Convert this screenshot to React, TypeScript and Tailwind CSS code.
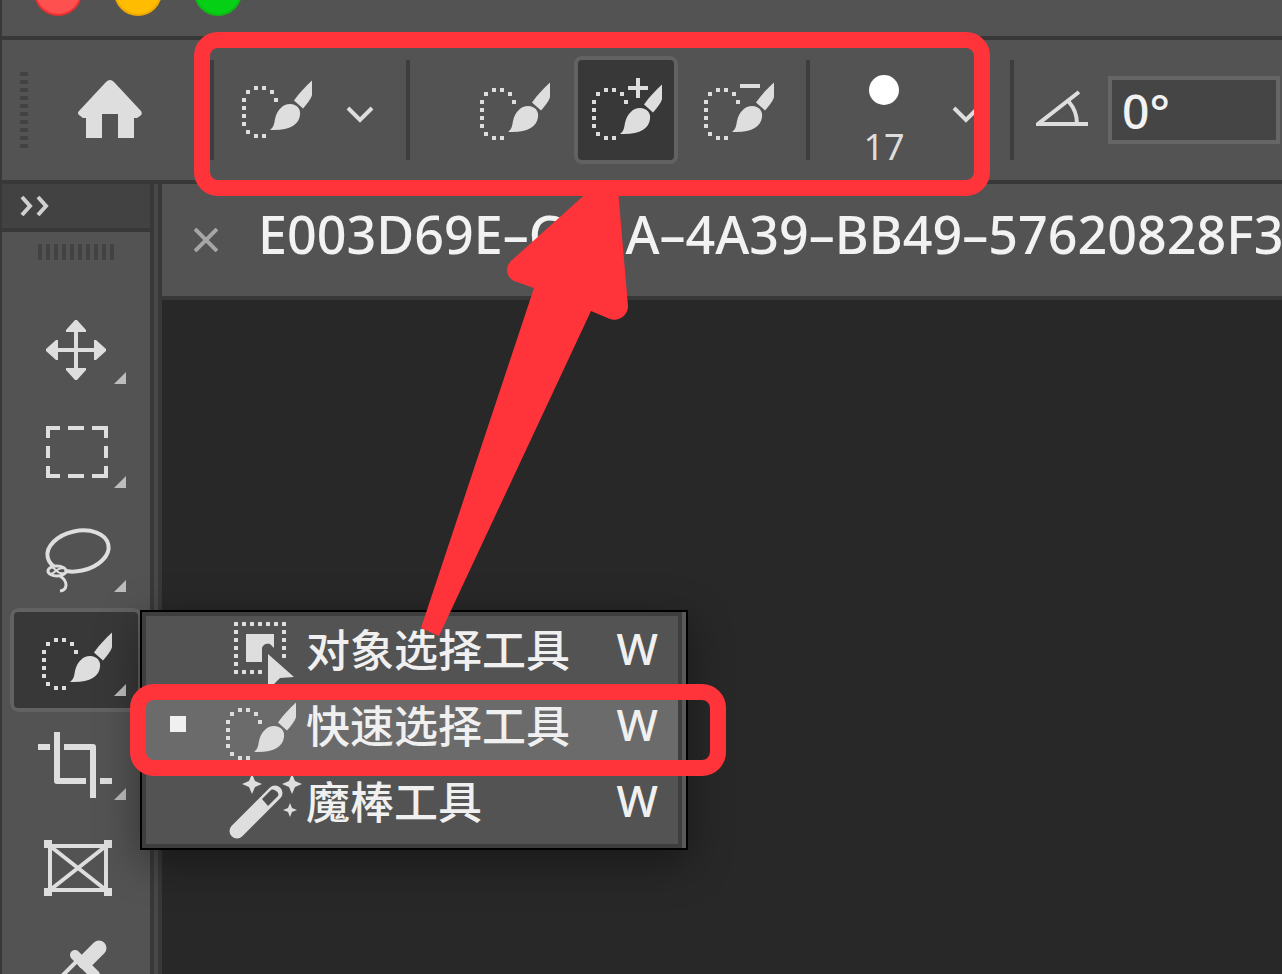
import { useState, type ReactNode } from "react";

const DOTS: Array<[number, number]> = [
    [14, 6], [22, 6], [6, 10], [30, 10], [2, 18], [34, 18],
    [2, 26], [2, 34], [2, 42], [6, 50], [14, 54], [22, 54],
];

const OBJECT_DOTS: Array<[number, number]> = [
    [10, 6], [18, 6], [26, 6], [34, 6], [42, 6], [50, 6], [58, 6],
    [10, 14], [10, 22], [10, 30], [10, 38], [10, 46], [10, 54],
    [18, 54], [26, 54], [34, 54],
    [58, 14], [58, 22], [58, 30], [58, 38],
];

// Dotted selection + brush, drawn in a 74x60 box
function QuickSelectShape({ mode = "new" }: { mode?: "new" | "add" | "subtract" }) {
    return (
        <>
            {DOTS.map(([x, y]) => (
                <rect key={`${x}-${y}`} x={x} y={y} width="4" height="4" fill="#dedede" />
            ))}
            <g fill="#dedede" transform={mode === "add" ? "translate(0 2)" : undefined}>
                <path d="M72 0.5V15C71 19 67 24 63 28.5L54 20.5C60 12 66 6 72 0.5Z" />
                <path d="M30 50C34 47 34 44 35 39C37 30 43 24 50 24C57 24 61 29 60 35C59 45 49 51 30 50Z" />
            </g>
            {mode === "add" && <path d="M38 6H58M48 -4V16" stroke="#dedede" strokeWidth="4" />}
            {mode === "subtract" && <path d="M38 4H58" stroke="#dedede" strokeWidth="4" />}
        </>
    );
}

function QuickSelectIcon({ mode }: { mode?: "new" | "add" | "subtract" }) {
    return (
        <svg className="h-15 w-[74px] shrink-0 overflow-visible" viewBox="0 0 74 60">
            <QuickSelectShape mode={mode} />
        </svg>
    );
}

function Chevron() {
    return (
        <svg className="h-7 w-7 shrink-0" viewBox="0 0 28 28" fill="none" stroke="#dedede" strokeWidth="4">
            <path d="M2 12L14 24L26 12" />
        </svg>
    );
}

function Separator() {
    return <div className="h-25 w-1 shrink-0 bg-[#3d3d3d]" />;
}

type Tool = { id: string; label: string; flyout: boolean; icon: ReactNode };

const TOOLS: Tool[] = [
    {
        id: "move",
        label: "移动工具",
        flyout: true,
        icon: (
            <g fill="#dedede">
                <path d="M64 34H68V74H64ZM46 52H86V56H46Z" />
                <path d="M65 24H67L76 34V36H56V34ZM65 84H67L76 74V72H56V74ZM36 53V55L46 64H48V44H46ZM96 53V55L86 64H84V44H86Z" />
            </g>
        ),
    },
    {
        id: "marquee",
        label: "矩形选框工具",
        flyout: true,
        icon: (
            <path
                d="M38 38V28H50M58 28H74M82 28H96V38M96 46V58M96 66V76H82M74 76H58M50 76H38V66M38 58V46"
                fill="none"
                stroke="#dedede"
                strokeWidth="4"
            />
        ),
    },
    {
        id: "lasso",
        label: "套索工具",
        flyout: true,
        icon: (
            <g fill="none" stroke="#dedede">
                <ellipse cx="68" cy="47" rx="31" ry="20" transform="rotate(-12 68 47)" strokeWidth="4" />
                <ellipse cx="47" cy="67" rx="9" ry="5" fill="#505050" strokeWidth="3" />
                <path d="M41 63C46 63 46 71 54 69M40 70C46 70 45 64 53 64" strokeWidth="2" />
                <path d="M50 72C58 77 58 86 50 87" strokeWidth="3" />
            </g>
        ),
    },
    {
        id: "quick",
        label: "快速选择工具",
        flyout: true,
        icon: (
            <g transform="translate(30 24)">
                <QuickSelectShape />
            </g>
        ),
    },
    {
        id: "crop",
        label: "裁剪工具",
        flyout: true,
        icon: (
            <path
                d="M28 35H40M47 20V69H76M54 35H83V86M90 69H102"
                fill="none"
                stroke="#dedede"
                strokeWidth="6"
                strokeLinejoin="round"
            />
        ),
    },
    {
        id: "frame",
        label: "图框工具",
        flyout: false,
        icon: (
            <g fill="none" stroke="#dedede" strokeWidth="4">
                <path d="M40 30H96V74H40ZM40 30L96 74M96 30L40 74" />
                <path d="M34 24H42V32H34ZM94 24H102V32H94ZM34 72H42V80H34ZM94 72H102V80H94Z" fill="#dedede" stroke="none" />
            </g>
        ),
    },
    {
        id: "eyedropper",
        label: "吸管工具",
        flyout: true,
        icon: (
            <g fill="none" stroke="#dedede" strokeLinecap="round">
                <path d="M89 28L75 42" strokeWidth="15" />
                <path d="M65 35L85 55" strokeWidth="10" />
                <path d="M66 42L46 62M80 54L60 74" strokeWidth="4" />
            </g>
        ),
    },
];

const MENU_ITEMS: Array<{ id: string; label: string; icon: ReactNode }> = [
    {
        id: "object",
        label: "对象选择工具",
        icon: (
            <g fill="#dedede">
                {OBJECT_DOTS.map(([x, y]) => (
                    <rect key={`${x}-${y}`} x={x} y={y} width="4" height="4" />
                ))}
                <path d="M22 18H50V32L46 28C42 27 38 29 38 33V46H22Z" />
                <path d="M44 38L70 61L56 62L44 74Z" />
            </g>
        ),
    },
    {
        id: "quick",
        label: "快速选择工具",
        icon: (
            <g transform="translate(0 10)">
                <QuickSelectShape />
            </g>
        ),
    },
    {
        id: "wand",
        label: "魔棒工具",
        icon: (
            <>
                <path d="M13 63L51 25" stroke="#dedede" strokeWidth="15" strokeLinecap="round" />
                <path d="M38 31L47 22C50 20 56 25 54 28L44 38Z" fill="#505050" />
                <g fill="#dedede">
                    <path d="M28 6L31 13L38 16L31 19L28 26L25 19L18 16L25 13Z" />
                    <path d="M68 6L71 13L78 16L71 19L68 26L65 19L58 16L65 13Z" />
                    <path d="M66 35L68 40L73 42L68 44L66 49L64 44L59 42L64 40Z" />
                </g>
            </>
        ),
    },
];

function FlyoutMenu() {
    const [selected, setSelected] = useState("quick");

    return (
        <div className="absolute left-[130px] top-0.5 z-10 flex w-[548px] border-2 border-black bg-[#5a5a5a] pr-1 shadow-[0_12px_40px_rgba(0,0,0,0.4)]">
            <div className="flex-1 border-4 border-[#3e3e3e]">
                {MENU_ITEMS.map((item) => (
                    <button
                        key={item.id}
                        type="button"
                        onClick={() => setSelected(item.id)}
                        className={`flex h-19 w-full items-center pl-6 pr-5 ${item.id === selected ? "bg-[#6b6b6b]" : "bg-[#535353]"}`}
                    >
                        <span className="w-[54px] pb-3">
                            <span className={`block size-4 ${item.id === selected ? "bg-[#f0f0f0]" : ""}`} />
                        </span>
                        <svg className="h-19 w-20 shrink-0" viewBox="0 0 80 76">
                            {item.icon}
                        </svg>
                        <span className="ml-0.5 flex flex-1 justify-between whitespace-nowrap pb-3 text-[44px] font-medium leading-none text-[#f0f0f0]">
                            <span className="font-['Noto_Sans_CJK_SC',sans-serif]">{item.label}</span>
                            <span className="font-['Noto_Sans',sans-serif]">W</span>
                        </span>
                    </button>
                ))}
            </div>
        </div>
    );
}

function OptionsBar() {
    const [mode, setMode] = useState<"new" | "add" | "subtract">("add");
    const modes: Array<"new" | "add" | "subtract"> = ["new", "add", "subtract"];

    return (
        <div className="flex h-36 shrink-0 items-center border-b-4 border-[#383838]">
            {/* Drag grip */}
            <div className="ml-[18px] h-[76px] w-2 shrink-0 bg-[repeating-linear-gradient(180deg,#424242_0_4px,transparent_4px_8px)]" />
            <button type="button" aria-label="主页" className="ml-[50px] mr-[68px] shrink-0">
                <svg className="h-15 w-16" viewBox="0 0 64 60" fill="#dedede">
                    <path d="M32 0Q34 0 36 2L63 31Q65 34 62 36L59 38H56V58H40V34H24V58H8V38H5L1 35Q-1 33 1 31L28 2Q30 0 32 0Z" />
                </svg>
            </button>
            <Separator />
            <button type="button" aria-label="当前工具" className="ml-[26px] mr-8 flex shrink-0 items-center gap-8">
                <QuickSelectIcon />
                <Chevron />
            </button>
            <Separator />
            <div className="ml-[52px] mr-4 flex shrink-0 gap-2">
                {modes.map((m) => (
                    <button
                        key={m}
                        type="button"
                        aria-label={m}
                        onClick={() => setMode(m)}
                        className={`flex h-27 w-26 items-center rounded-lg border-4 pl-3 pt-1 ${m === mode ? "border-[#626262] bg-[#383838]" : "border-transparent"}`}
                    >
                        <QuickSelectIcon mode={m} />
                    </button>
                ))}
            </div>
            <Separator />
            <button type="button" aria-label="画笔选项" className="ml-[54px] mr-[30px] flex shrink-0 items-center gap-12">
                <span className="flex w-10 flex-col items-center gap-6 pt-5">
                    <span className="size-[30px] rounded-full bg-white" />
                    <span className="font-['Noto_Sans',sans-serif] text-[36px] leading-9 text-[#dedede]">17</span>
                </span>
                <Chevron />
            </button>
            <Separator />
            <label htmlFor="angle" className="ml-[22px] mr-5 shrink-0">
                <svg className="h-10 w-13" viewBox="0 0 52 40" fill="none" stroke="#dedede" strokeWidth="4">
                    <path d="M52 34H2L43 2M33 12Q41 21 41 34" />
                </svg>
            </label>
            <input
                id="angle"
                defaultValue="0°"
                className="mr-0.5 h-17 min-w-0 flex-1 border-4 border-[#666666] bg-[#454545] px-2.5 font-['Noto_Sans',sans-serif] text-[48px] font-medium leading-none text-[#f2f2f2] outline-none"
            />
        </div>
    );
}

function Toolbar() {
    const [active, setActive] = useState("quick");

    return (
        <aside className="w-[156px] shrink-0 border-r-4 border-[#484848]">
            <div className="border-r-4 border-[#383838]">
                <button type="button" aria-label="展开" className="flex h-12 w-full items-center border-b-4 border-[#383838] bg-[#424242] pl-[18px]">
                    <svg className="h-6 w-8" viewBox="0 0 32 24" fill="none" stroke="#d0d0d0" strokeWidth="4">
                        <path d="M2 3L10 12L2 21M18 3L26 12L18 21" />
                    </svg>
                </button>
                <div className="h-16 pl-9 pt-3">
                    <div className="h-4 w-[76px] bg-[repeating-linear-gradient(90deg,#424242_0_4px,transparent_4px_8px)]" />
                </div>
                {TOOLS.map((tool) => (
                    <div key={tool.id} className="relative ml-2 w-33">
                        <button
                            type="button"
                            aria-label={tool.label}
                            onClick={() => setActive(tool.id)}
                            className={`block h-26 w-full rounded-lg ring-inset ${tool.id === active ? "bg-[#383838] ring-4 ring-[#626262]" : ""}`}
                        >
                            <svg className="h-26 w-full" viewBox="0 0 132 104">
                                {tool.icon}
                                {tool.flyout && <path d="M104 88L116 76V88Z" fill="#bdbdbd" />}
                            </svg>
                        </button>
                        {tool.id === "quick" && <FlyoutMenu />}
                    </div>
                ))}
            </div>
        </aside>
    );
}

export default function App() {
    return (
        <div className="relative flex h-screen flex-col overflow-hidden border-l-2 border-[#383838] bg-[#535353]">
            {/* Title bar */}
            <header className="flex h-10 shrink-0 items-end gap-8 overflow-hidden border-b-4 border-[#383838] pb-5 pl-8">
                <span className="size-12 shrink-0 rounded-full border-2 border-[#ee2f2f] bg-[#ff5050]" />
                <span className="size-12 shrink-0 rounded-full border-2 border-[#f0a800] bg-[#ffbc00]" />
                <span className="size-12 shrink-0 rounded-full border-2 border-[#0fb814] bg-[#05d016]" />
            </header>

            <OptionsBar />

            <div className="flex min-h-0 flex-1">
                <Toolbar />
                <main className="flex min-w-0 flex-1 flex-col border-l-4 border-[#383838]">
                    {/* Document tab */}
                    <div className="flex h-29 shrink-0 items-center gap-10 overflow-hidden border-b-4 border-[#383838] pl-8">
                        <button type="button" aria-label="关闭" className="shrink-0">
                            <svg className="size-6" viewBox="0 0 24 24" stroke="#a6a6a6" strokeWidth="4">
                                <path d="M1 1L23 23M23 1L1 23" />
                            </svg>
                        </button>
                        <span className="whitespace-nowrap pb-3 font-['Noto_Sans',sans-serif] text-[52px] font-medium leading-none text-[#f2f2f2]">
                            E003D69E–CB1A–4A39–BB49–57620828F3
                        </span>
                    </div>
                    <div className="flex-1 bg-[#282828]" />
                </main>
            </div>

            {/* Annotations */}
            <div className="pointer-events-none absolute left-48 top-8 z-20 h-41 w-[796px] rounded-3xl border-16 border-[#ff343a]" />
            <div className="pointer-events-none absolute left-32 top-[684px] z-20 h-23 w-[596px] rounded-3xl border-16 border-[#ff343a]" />
            <svg className="pointer-events-none absolute left-[418px] top-45 z-20 h-[460px] w-[220px]" viewBox="420 180 220 460" fill="#ff343a">
                <path d="M600 181L511 261C505 267 506 277 514 281L534 288L421 628L439 636L591 311L610 319C618 322 628 316 628 306L618 190Z" />
            </svg>
        </div>
    );
}
